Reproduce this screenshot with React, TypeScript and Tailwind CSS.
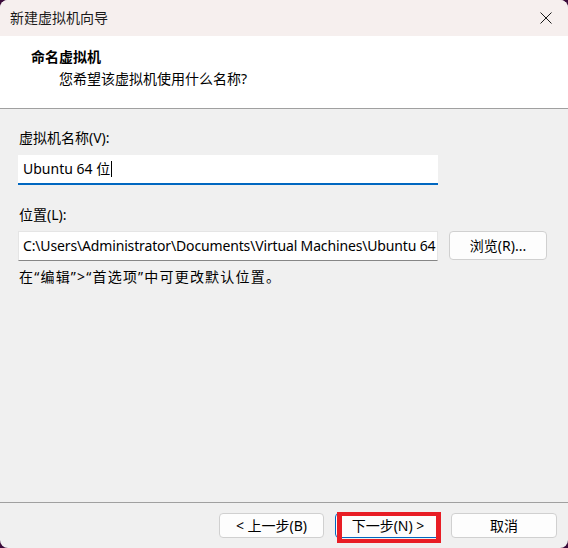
export default function App() {
  return (
    <div className="w-[568px] h-[548px] bg-[#3b0b3a] font-[family-name:'Noto_Sans','Noto_Sans_CJK_SC',sans-serif] text-[14px] leading-[20px] text-black">
      <div className="w-full h-full rounded-[8px] overflow-hidden flex flex-col bg-[#f0f0f0]">
        {/* title bar */}
        <div className="h-[36px] shrink-0 bg-[#f6efee] flex items-center justify-between pl-[10px] pr-[16px]">
          <span className="text-[#1a1a1a]">新建虚拟机向导</span>
          <svg width="12" height="12" viewBox="0 0 12 12">
            <path d="M0.5 0.5 L11.5 11.5 M11.5 0.5 L0.5 11.5" stroke="#1a1a1a" strokeWidth="1" />
          </svg>
        </div>

        {/* page header */}
        <div className="h-[73px] shrink-0 bg-white border-b border-[#a0a0a0] pl-[31px] pt-[11px]">
          <div className="font-bold">命名虚拟机</div>
          <div className="pl-[28px] mt-[2px]">您希望该虚拟机使用什么名称?</div>
        </div>

        {/* form */}
        <div className="flex-1 pl-[18px] pt-[19px]">
          <div className="pl-[1px]">虚拟机名称(V):</div>
          <div className="mt-[7px] w-[420px] h-[30px] bg-white border-b-2 border-[#0067c0] flex items-center pl-[5px]">
            <span className="whitespace-nowrap">Ubuntu 64 位</span>
            <span className="w-[1px] h-[16px] bg-black ml-[1px]" />
          </div>

          <div className="pl-[1px] mt-[20px]">位置(L):</div>
          <div className="mt-[6px] flex items-start gap-[11px]">
            <div className="w-[420px] h-[30px] bg-white border border-[#e5e5e5] border-b-[#868686] flex items-center pl-[4px] overflow-hidden">
              <span className="whitespace-nowrap tracking-[-0.15px]">
                C:\Users\Administrator\Documents\Virtual Machines\Ubuntu 64
              </span>
            </div>
            <button className="w-[98px] h-[29px] rounded-[4px] bg-[#fdfdfd] border border-[#d0d0d0] flex items-center justify-center">
              浏览(R)...
            </button>
          </div>

          <div className="pl-[1px] mt-[6px] tracking-[1.2px]">在“编辑”&gt;“首选项”中可更改默认位置。</div>
        </div>

        {/* footer */}
        <div className="shrink-0 border-t border-[#a0a0a0] pt-[10px] pb-[10px] pr-[11px] flex justify-end">
          <button className="w-[105px] h-[25px] rounded-[4px] bg-[#fdfdfd] border border-[#d0d0d0] flex items-center justify-center">
            &lt; 上一步(B)
          </button>
          <div className="relative ml-[11px]">
            <button className="w-[106px] h-[25px] rounded-[4px] bg-[#fdfdfd] border border-[#0067c0] flex items-center justify-center">
              下一步(N) &gt;
            </button>
            <div className="absolute left-[2px] top-[-1px] w-[104px] h-[31px] border-y-[4px] border-x-[5px] border-[#e81d25]" />
          </div>
          <button className="ml-[10px] w-[106px] h-[25px] rounded-[4px] bg-[#fdfdfd] border border-[#d0d0d0] flex items-center justify-center">
            取消
          </button>
        </div>
      </div>
    </div>
  );
}
